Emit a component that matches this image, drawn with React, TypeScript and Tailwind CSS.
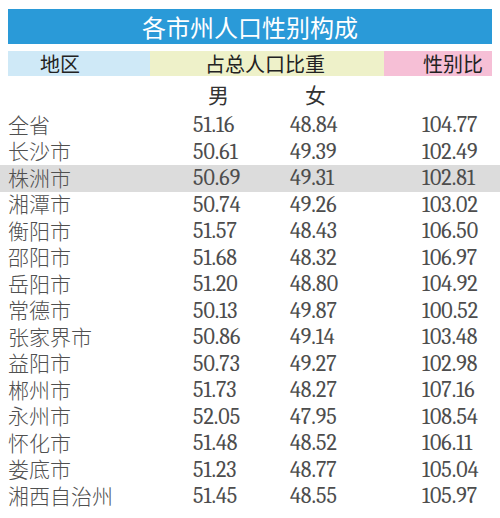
const rows: [string, string, string, string][] = [
  ["全省", "51.16", "48.84", "104.77"],
  ["长沙市", "50.61", "49.39", "102.49"],
  ["株洲市", "50.69", "49.31", "102.81"],
  ["湘潭市", "50.74", "49.26", "103.02"],
  ["衡阳市", "51.57", "48.43", "106.50"],
  ["邵阳市", "51.68", "48.32", "106.97"],
  ["岳阳市", "51.20", "48.80", "104.92"],
  ["常德市", "50.13", "49.87", "100.52"],
  ["张家界市", "50.86", "49.14", "103.48"],
  ["益阳市", "50.73", "49.27", "102.98"],
  ["郴州市", "51.73", "48.27", "107.16"],
  ["永州市", "52.05", "47.95", "108.54"],
  ["怀化市", "51.48", "48.52", "106.11"],
  ["娄底市", "51.23", "48.77", "105.04"],
  ["湘西自治州", "51.45", "48.55", "105.97"],
];

export default function App() {
  return (
    <div className="w-[500px] h-[518px] bg-white pt-[9px] overflow-hidden font-[family-name:Noto_Sans_CJK_SC]">
      <div className="mx-[8px] h-[35px] bg-[#2a9ad8] flex items-center justify-center text-white text-[24px] leading-none">
        各市州人口性别构成
      </div>

      <div className="mx-[8px] mt-[7px] h-[25px] flex text-[20px] leading-none text-[#222]">
        <div className="w-[142px] bg-[#cfe9f7] flex items-center pl-[32px]">地区</div>
        <div className="w-[234px] bg-[#eef1c9] flex items-center pl-[55px]">占总人口比重</div>
        <div className="flex-1 bg-[#f6bfd6] flex items-center justify-end pr-[9px]">性别比</div>
      </div>

      <div className="h-[36px] flex items-center text-[21px] leading-none text-[#333]">
        <div className="w-[208px]" />
        <div className="w-[97px]">男</div>
        <div>女</div>
      </div>

      <div className="flex flex-col">
        {rows.map(([name, m, f, r], i) => (
          <div
            key={name}
            className={`h-[26.5px] flex items-center pl-[8px] text-[#4d4d4d] ${i === 2 ? "bg-[#dcdcdc]" : ""}`}
          >
            <div className="w-[185px] text-[21px] font-light leading-none text-[#505050] -mt-[2px]">{name}</div>
            <div className="w-[97px] text-[22px] leading-none font-serif">{m}</div>
            <div className="w-[132px] text-[22px] leading-none font-serif">{f}</div>
            <div className="text-[22px] leading-none font-serif">{r}</div>
          </div>
        ))}
      </div>
    </div>
  );
}
